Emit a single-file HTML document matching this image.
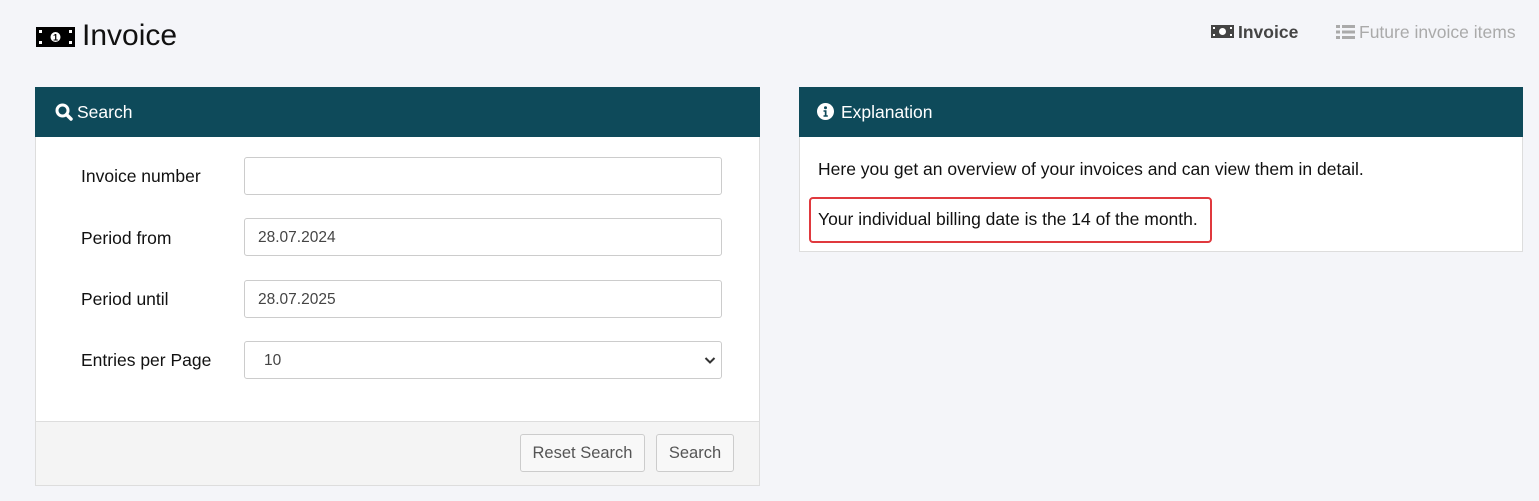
<!DOCTYPE html>
<html><head><style>
body{margin:0;width:1539px;height:501px;background:#f4f5f9;font-family:"Liberation Sans",sans-serif;position:relative;overflow:hidden;color:#111}
.a{position:absolute}
.hd{background:#0e4a5a;color:#fff;font-size:17.5px;height:50px;line-height:50px}
.inp{position:absolute;left:244px;width:478px;height:38px;background:#fff;border:1px solid #ccc;border-radius:3px;font-size:15.5px;line-height:37px;color:#444;box-sizing:border-box;padding-left:13px}
.lbl{position:absolute;left:81px;font-size:17.5px}
.btn{position:absolute;top:434px;height:38px;border:1px solid #ccc;border-radius:3px;background:#f8f8f8;font-size:16.5px;line-height:36px;color:#555;box-sizing:border-box;text-align:center}
</style></head><body>
<svg class="a" style="left:36px;top:27px" width="39" height="20" viewBox="0 0 39 20"><rect width="39" height="20" fill="#000"/><circle cx="19.5" cy="10" r="5" fill="#fff"/><text x="19.5" y="13.5" font-size="9" text-anchor="middle" font-family="Liberation Sans" font-weight="bold">1</text><g fill="#fff"><rect x="3" y="3" width="3" height="3"/><rect x="33" y="3" width="3" height="3"/><rect x="3" y="14" width="3" height="3"/><rect x="33" y="14" width="3" height="3"/></g></svg>
<div class="a" style="left:82px;top:19px;font-size:30px">Invoice</div>
<svg class="a" style="left:1211px;top:25px" width="23" height="13" viewBox="0 0 23 13"><rect width="23" height="13" fill="#444"/><circle cx="11.5" cy="6.5" r="3.5" fill="#fff"/><g fill="#fff"><rect x="2" y="2" width="2" height="2"/><rect x="19" y="2" width="2" height="2"/><rect x="2" y="9" width="2" height="2"/><rect x="19" y="9" width="2" height="2"/></g></svg>
<div class="a" style="left:1238px;top:22px;font-size:17.5px;font-weight:bold;color:#444">Invoice</div>
<svg class="a" style="left:1336px;top:24px" width="19" height="16" viewBox="0 0 19 16" fill="#aaa"><rect x="0" y="1" width="4" height="3"/><rect x="6" y="1" width="13" height="3"/><rect x="0" y="6.5" width="4" height="3"/><rect x="6" y="6.5" width="13" height="3"/><rect x="0" y="12" width="4" height="3"/><rect x="6" y="12" width="13" height="3"/></svg>
<div class="a" style="left:1359px;top:22px;font-size:17.5px;color:#aaa">Future invoice items</div>

<div class="a" style="left:35px;top:87px;width:725px;height:399px;background:#fff;border:1px solid #ddd;box-sizing:border-box"></div>
<div class="a hd" style="left:35px;top:87px;width:725px"><svg style="position:absolute;left:20px;top:16px" width="18" height="18" viewBox="0 0 18 18"><circle cx="7.5" cy="7.5" r="5.5" fill="none" stroke="#fff" stroke-width="3"/><line x1="11.5" y1="11.5" x2="16" y2="16" stroke="#fff" stroke-width="3.5" stroke-linecap="round"/></svg><span style="position:absolute;left:42px">Search</span></div>
<div class="lbl" style="top:166px">Invoice number</div><div class="inp" style="top:157px"></div>
<div class="lbl" style="top:228px">Period from</div><div class="inp" style="top:218px">28.07.2024</div>
<div class="lbl" style="top:289px">Period until</div><div class="inp" style="top:280px">28.07.2025</div>
<div class="lbl" style="top:350px">Entries per Page</div><div class="inp" style="top:341px;padding-left:19px">10<svg style="position:absolute;right:5px;top:14px" width="12" height="9" viewBox="0 0 12 9"><path d="M1.5 2l4.5 4.5 4.5-4.5" fill="none" stroke="#333" stroke-width="2"/></svg></div>
<div class="a" style="left:36px;top:421px;width:723px;height:63px;background:#f4f4f4;border-top:1px solid #ddd"></div>
<div class="btn" style="left:520px;width:125px">Reset Search</div>
<div class="btn" style="left:656px;width:78px">Search</div>

<div class="a" style="left:799px;top:87px;width:724px;height:165px;background:#fff;border:1px solid #ddd;box-sizing:border-box"></div>
<div class="a hd" style="left:799px;top:87px;width:724px"><svg style="position:absolute;left:18px;top:16px" width="17" height="17" viewBox="0 0 17 17"><circle cx="8.5" cy="8.5" r="8.5" fill="#fff"/><circle cx="8.5" cy="4.7" r="1.5" fill="#0e4a5a"/><path d="M6.5 7.3h3v5h1.3v1.5h-4.3v-1.5h1.3v-3.5h-1.3z" fill="#0e4a5a"/></svg><span style="position:absolute;left:42px">Explanation</span></div>
<div class="a" style="left:818px;top:159px;font-size:17.5px">Here you get an overview of your invoices and can view them in detail.</div>
<div class="a" style="left:809px;top:197px;width:403px;height:46px;border:2.5px solid #e0393e;border-radius:4px;box-sizing:border-box"></div>
<div class="a" style="left:818px;top:209px;font-size:17.5px">Your individual billing date is the 14 of the month.</div>
</body></html>
